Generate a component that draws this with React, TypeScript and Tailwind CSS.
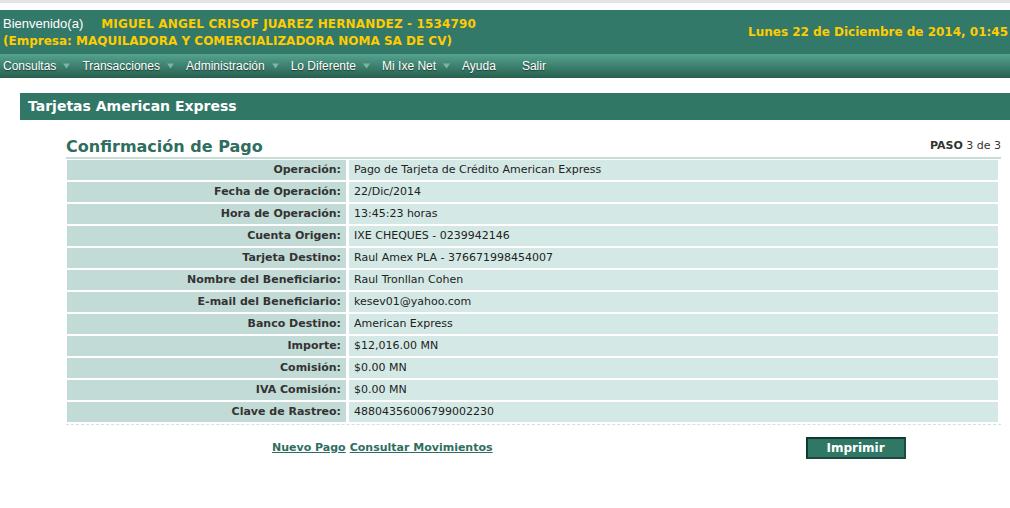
const rows: [string, string][] = [
  ["Operación:", "Pago de Tarjeta de Crédito American Express"],
  ["Fecha de Operación:", "22/Dic/2014"],
  ["Hora de Operación:", "13:45:23 horas"],
  ["Cuenta Origen:", "IXE CHEQUES - 0239942146"],
  ["Tarjeta Destino:", "Raul Amex PLA - 376671998454007"],
  ["Nombre del Beneficiario:", "Raul Tronllan Cohen"],
  ["E-mail del Beneficiario:", "kesev01@yahoo.com"],
  ["Banco Destino:", "American Express"],
  ["Importe:", "$12,016.00 MN"],
  ["Comisión:", "$0.00 MN"],
  ["IVA Comisión:", "$0.00 MN"],
  ["Clave de Rastreo:", "48804356006799002230"],
];

const menu = ["Consultas", "Transacciones", "Administración", "Lo Diferente", "Mi Ixe Net", "Ayuda"];

function Arrow() {
  return (
    <svg className="ml-[7px] mr-[12px]" width="7" height="6" viewBox="0 0 7 6">
      <path d="M0 0.5h7L3.5 5.5z" fill="#7db4a6" />
    </svg>
  );
}

export default function App() {
  return (
    <div className="h-[508px] w-[1010px] overflow-hidden bg-white font-['DejaVu_Sans',sans-serif]">
      <div className="h-[10px] border-t-[3px] border-[#e4e4e4]" />

      {/* header */}
      <div className="flex h-[44px] items-center justify-between whitespace-nowrap bg-[#33796a] pl-[3px]">
        <div className="text-[12px] font-bold leading-[17px] text-[#ffcc00]">
          <div>
            <span className="mr-[18px] font-['Liberation_Sans',sans-serif] text-[13px] font-normal text-white">
              Bienvenido(a)
            </span>
            <span className="tracking-[0.15px]">MIGUEL ANGEL CRISOF JUAREZ HERNANDEZ - 1534790</span>
          </div>
          <div>(Empresa: MAQUILADORA Y COMERCIALIZADORA NOMA SA DE CV)</div>
        </div>
        <div className="pr-[2px] text-[12px] font-bold text-[#ffcc00]">
          Lunes 22 de Diciembre de 2014, 01:45
        </div>
      </div>

      {/* nav */}
      <div className="flex h-[24px] items-center bg-gradient-to-b from-[#55a390] to-[#27604f] pl-[3px] font-['Liberation_Sans',sans-serif] text-[12px] text-white [text-shadow:0_1px_1px_rgba(0,0,0,0.5)]">
        {menu.map((m, i) => (
          <span key={m} className="flex items-center">
            {m}
            {i < menu.length - 1 && <Arrow />}
          </span>
        ))}
        <span className="ml-[26px]">Salir</span>
      </div>

      {/* section title */}
      <div className="ml-[20px] mt-[15px] flex h-[27px] items-center bg-[#317766] pl-[8px] text-[14px] font-bold text-white">
        Tarjetas American Express
      </div>

      <div className="ml-[66px] mr-[9px] mt-[16px]">
        <div className="flex h-[23px] items-center justify-between border-b-2 border-[#c6dcd7]">
          <div className="text-[16px] font-bold text-[#2f6e5f]">Confirmación de Pago</div>
          <div className="text-[11px] text-[#333]">
            <span className="font-bold">PASO</span> 3 de 3
          </div>
        </div>

        <div className="mt-[1px] flex flex-col gap-[2px] border-b border-dashed border-[#d2e3df] pb-[2px] pl-[1px] pr-[3px] text-[11px] text-[#222]">
          {rows.map(([k, v]) => (
            <div key={k} className="flex h-[20px] gap-[3px]">
              <div className="flex w-[279px] items-center justify-end bg-[#c3dbd6] pr-[5px] font-bold text-[#333]">
                {k}
              </div>
              <div className="flex flex-1 items-center bg-[#d4e9e5] pl-[5px]">{v}</div>
            </div>
          ))}
        </div>

        <div className="mt-[12px] flex items-center">
          <div className="ml-[206px] flex gap-[4px] text-[11px] font-bold text-[#2f6e5f] underline">
            <span>Nuevo Pago</span>
            <span>Consultar Movimientos</span>
          </div>
          <button className="ml-[313px] h-[22px] w-[100px] border-2 border-l-[#0f3a2f] border-t-[#0f3a2f] border-r-[#1e4a3f] border-b-[#1e4a3f] bg-[#317766] text-[12px] font-bold text-white">
            Imprimir
          </button>
        </div>
      </div>
    </div>
  );
}
